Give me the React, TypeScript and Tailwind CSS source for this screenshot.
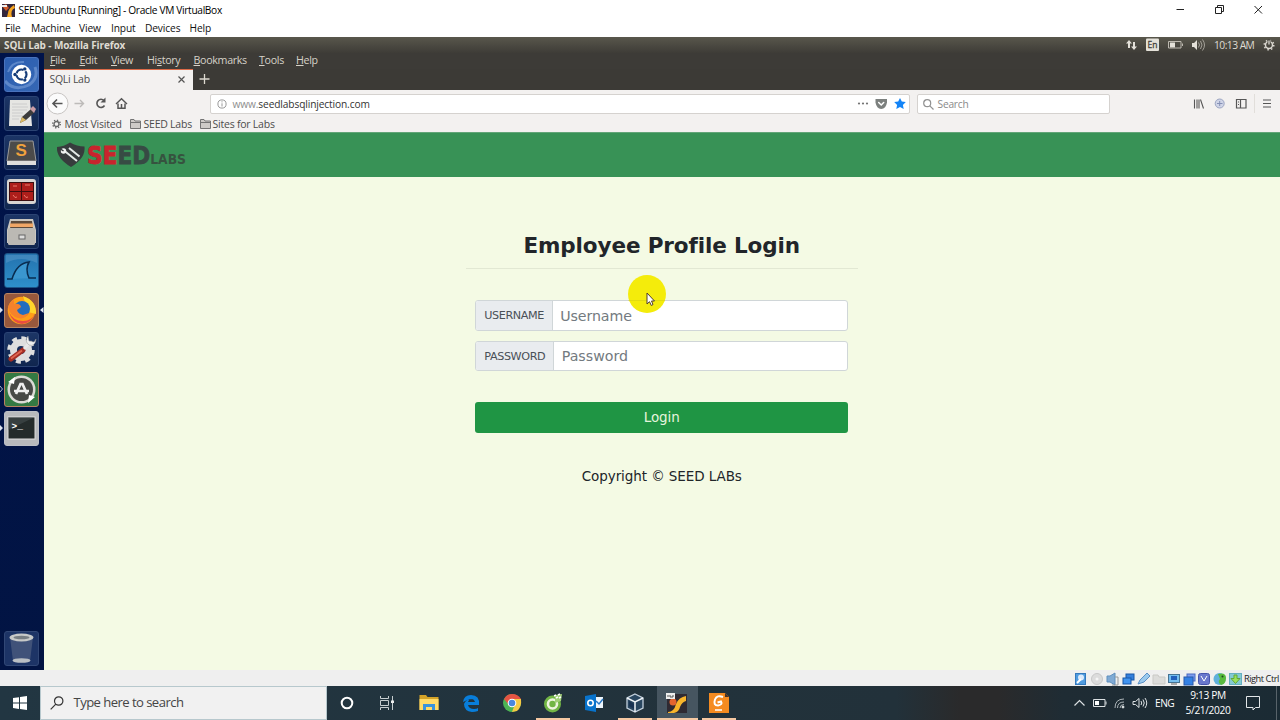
import type { ReactNode } from "react";

function MenuItem({ label, mnemonic, width }: { label: string; mnemonic: number; width: string }) {
  return (
    <span className={width}>
      {label.slice(0, mnemonic)}
      <span className="underline underline-offset-1">{label[mnemonic]}</span>
      {label.slice(mnemonic + 1)}
    </span>
  );
}

function WindowTitle() {
  return (
    <header className="flex h-[20px] shrink-0 items-center bg-white pl-[2px] text-[10.200px] text-black">
      <svg width="13" height="13" viewBox="0 0 13 13" className="mr-[3.500px]">
        <rect width="13" height="13" fill="#33263b" />
        <path d="M6 9Q6 5 12 1L13 4Q8 6 10 13H5Z" fill="#f6a51f" />
        <path d="M0 2L4 0L7 4L4 7Z" fill="#cf5b2b" />
        <path d="M0 1H5V3H0Z" fill="#eee" />
      </svg>
      <span className="tracking-[-0.340px]">SEEDUbuntu [Running] - Oracle VM VirtualBox</span>
      <svg width="90" height="14" viewBox="0 0 90 14" className="mr-[14px] ml-auto" fill="none" stroke="#222" strokeWidth="1">
        <path d="M0.500 6.500H8" />
        <path d="M39.500 4.500h6v6h-6zM41.500 4.500v-2h6v6h-2" />
        <path d="M78.500 3L86 10.500M86 3L78.500 10.500" />
      </svg>
    </header>
  );
}

function VmMenu() {
  return (
    <nav className="flex h-[17px] shrink-0 items-center bg-white pl-[5px] text-[10.200px] tracking-[-0.120px] text-[#111]">
      <span className="w-[26px]">File</span>
      <span className="w-[48px]">Machine</span>
      <span className="w-[32px]">View</span>
      <span className="w-[34px]">Input</span>
      <span className="w-[44.500px]">Devices</span>
      <span>Help</span>
    </nav>
  );
}

function GuestPanel() {
  return (
    <div className="flex h-[16px] shrink-0 items-center bg-linear-to-b from-[#59574c] to-[#3e3c37] pl-[4px] text-[10px] text-[#dfdbd2]">
      <span className="font-bold tracking-[-0.120px]">SQLi Lab - Mozilla Firefox</span>
      <svg width="86" height="16" viewBox="0 0 86 16" className="ml-auto">
        <g fill="#e4e1d9">
          <path d="M3 3L6 6.500H4V11H2V6.500H0ZM8 13L5 9.500H7V5H9V9.500H11Z" />
          <rect x="20" y="1.500" width="13" height="12.500" rx="1" />
          <path d="M66 6h2l3-3v10l-3-3h-2z" />
          <rect x="44" y="5.500" width="5" height="5" />
        </g>
        <text x="21.500" y="11" fontSize="8.500" fill="#45433d" stroke="#45433d" strokeWidth=".3" fontFamily="Open Sans">En</text>
        <path d="M42.500 4.500H55V11H42.500ZM56.500 6.500V9" fill="none" stroke="#bdb9b0" />
        <path d="M72.500 5.500q2 2.500 0 5M74.500 4q3 4 0 8M76.500 2.500q4 5.500 0 11" fill="none" stroke="#a5a299" />
      </svg>
      <span className="ml-[2px] w-[49px] text-[10.300px] tracking-[-0.550px] whitespace-nowrap">10:13 AM</span>
      <svg width="12" height="12" viewBox="0 0 12 12" className="mr-[5px]" fill="none" stroke="#dedbd3">
        <circle cx="6" cy="6" r="3.500" strokeWidth="1.400" />
        <circle cx="6" cy="6" r="4.800" strokeWidth="1.500" strokeDasharray="1.500 2.270" />
        <path d="M6 0v5" stroke="#4b4941" strokeWidth="3" />
        <path d="M6 1.500v4" strokeWidth="1.300" />
      </svg>
    </div>
  );
}

function Tile({ tone, children }: { tone: string; children: ReactNode }) {
  return (
    <div className={`h-[35px] w-[35px] shrink-0 overflow-hidden rounded-[3px] border ${tone}`}>
      <svg width="33" height="33" viewBox="0 0 33 33">{children}</svg>
    </div>
  );
}

function Launcher() {
  const dim = "border-[#2b4373] bg-linear-to-b from-[#1c3566] to-[#10264f]";
  return (
    <aside className="relative flex w-[43.500px] shrink-0 flex-col gap-[4.400px] bg-linear-to-b from-[#00134a] to-[#021443] pt-[3.500px] pb-[4px] pl-[4px]">
      <Tile tone="border-[#4a73bd] bg-linear-to-br from-[#2c5eb0] to-[#3567b4]">
        <path d="M0 23Q9 34 24 27Q34 20 30 9" fill="none" stroke="#7ba0d8" strokeWidth="3" opacity=".6" />
        <path d="M3 14Q7 3 19 4" fill="none" stroke="#7ba0d8" strokeWidth="2" opacity=".6" />
        <circle cx="16.500" cy="16.500" r="9.700" fill="#fff" />
        <circle cx="16.500" cy="16.500" r="5" fill="none" stroke="#173d79" strokeWidth="2.200" strokeDasharray="8.470 2" strokeDashoffset="-6.200" />
        <circle cx="10" cy="16.500" r="1.700" fill="#173d79" />
        <circle cx="19.800" cy="10.900" r="1.700" fill="#173d79" />
        <circle cx="19.800" cy="22.100" r="1.700" fill="#173d79" />
      </Tile>
      <Tile tone={dim}>
        <path d="M5 3H25L27 29H4Z" fill="#e6e6e3" />
        <path d="M7 7H22M7 10H23M7 13H22M7 16H18M7 19H18M7 22H14" stroke="#ccc" />
        <path d="M15 26L17 20L26 12L30 15L21 23Z" fill="#3c3c3c" />
        <path d="M15 26L17 20L21 23Z" fill="#dbb963" />
        <path d="M25 12L28 9L31 12L29 16Z" fill="#c99ca5" />
      </Tile>
      <Tile tone={dim}>
        <path d="M5 5H28L31 25V29H2V25Z" fill="#484848" />
        <path d="M5 5H28L31 25H2Z" fill="#4c4b4a" stroke="#999" />
        <path d="M2 25H31V29H2Z" fill="#dededb" />
        <text x="10.500" y="20" fontSize="17" fontWeight="bold" fill="#f1a23d" fontFamily="Liberation Sans">S</text>
      </Tile>
      <Tile tone={dim}>
        <rect x="2" y="3" width="29" height="25" rx="3" fill="#d8d5d1" />
        <rect x="4" y="6" width="25" height="19" fill="#3c0e10" />
        <path d="M5 7H16V15H5ZM17 7H28V15H17ZM5 16H16V24H5ZM17 16H28V24H17Z" fill="#ad1e1b" />
        <path d="M8 10h4M20 9h5M8 19q2 4 4 2M19 19q2 4 4 2" fill="none" stroke="#ed796b" />
      </Tile>
      <Tile tone={dim}>
        <path d="M5 4H28L31 15V28H2V15Z" fill="#c9c6c0" />
        <path d="M6 6H27L28 14H5Z" fill="#5c4b3c" />
        <path d="M5 8.500H28V12H5Z" fill="#f0a767" />
        <rect x="3" y="13" width="27" height="17" rx="1.500" fill="#bbb9b4" />
        <rect x="14" y="20" width="6" height="4" fill="#ddd" stroke="#666" />
      </Tile>
      <Tile tone="border-[#1c5385] bg-linear-to-b from-[#2472ae] to-[#2e90cb]">
        <path d="M2 25H7Q12 9 24 8Q20 15 24 24H31" fill="#3a96cf" stroke="#092c50" strokeWidth="1.600" />
        <path d="M1 1H32V9Q16 1 1 9Z" fill="#73aad4" opacity=".35" />
      </Tile>
      <Tile tone="border-[#b88562] bg-[#98583c]">
        <circle cx="16.500" cy="16.500" r="13.800" fill="#ff9f17" />
        <path d="M18 2Q32 7 31 20L23 18Z" fill="#ffd52b" />
        <circle cx="17" cy="15" r="8" fill="#226dbf" />
        <path d="M3 13Q5 7 9 6L9 10Q15 9 16 13L12 16Q13 20 18 21L24 19Q20 26 13 24Q5 22 3 13Z" fill="#f6822b" />
        <path d="M4 18Q7 29 17 30Q27 29 30 19Q27 27 18 27Q8 27 4 18Z" fill="#e94c42" />
      </Tile>
      <Tile tone={dim}>
        <circle cx="16" cy="17" r="7.500" fill="none" stroke="#dedede" strokeWidth="7" />
        <circle cx="16" cy="17" r="12" fill="none" stroke="#dedede" strokeWidth="3.500" strokeDasharray="5 4.420" />
        <path d="M6 26L18 17" stroke="#a52e24" strokeWidth="5" strokeLinecap="round" />
        <path d="M6 25.500L17 17.500" stroke="#df6651" strokeWidth="1.800" />
        <path d="M19 16L25 9" stroke="#e8e8e8" strokeWidth="3" />
        <path d="M23 3L24 8L29 9L31 6Q30 14 24 12Q19 8 23 3Z" fill="#eee" stroke="#999" strokeWidth=".5" />
      </Tile>
      <Tile tone="border-[#b68060] bg-[#347943]">
        <circle cx="16.500" cy="16.500" r="14" fill="#dadad5" />
        <circle cx="16.500" cy="16.500" r="11.500" fill="#474946" />
        <path d="M11 21L15.500 11H17.500L22 21M9 18H24" fill="none" stroke="#eee" strokeWidth="2.700" />
        <path d="M3 9L10 4L9 11ZM30 24L23 30L24 22Z" fill="#fff" />
      </Tile>
      <Tile tone="border-[#bcbfc6] bg-[#b8babd]">
        <rect x="3" y="5" width="27" height="22" fill="#242b2b" stroke="#ddd" />
        <path d="M3 5H30L3 18Z" fill="#566061" opacity=".4" />
        <text x="6.500" y="17" fontSize="9.500" fontWeight="bold" fill="#fff" fontFamily="Liberation Mono">&gt;_</text>
      </Tile>
      <div className="mt-auto flex">
        <Tile tone="border-[#314775] bg-[#1d3466]">
          <path d="M5 5H28L25 29H8Z" fill="#6c7890" opacity=".45" />
          <ellipse cx="16.500" cy="5.500" rx="12" ry="4" fill="#c7c9c8" />
          <ellipse cx="16.500" cy="5.500" rx="8" ry="1.700" fill="#777e83" />
          <ellipse cx="16.500" cy="28.500" rx="9" ry="2.300" fill="#babfc4" />
        </Tile>
      </div>
      <svg width="44" height="400" viewBox="0 0 44 400" className="absolute top-0 left-0">
        <path d="M0 254L3 257L0 260ZM43.500 254L40 257L43.500 260ZM0 372L3 375L0 378Z" fill="#dce2ed" />
        <path d="M0 333L2.500 336L0 339" fill="none" stroke="#aab7cb" />
      </svg>
    </aside>
  );
}

function FirefoxChrome() {
  return (
    <>
      <div className="flex h-[16px] shrink-0 items-center bg-[#3d3b37] pb-px pl-[6.500px] text-[10.700px] tracking-[-0.330px] text-[#d6d2c8]">
        <MenuItem label="File" mnemonic={0} width="w-[29.500px]" />
        <MenuItem label="Edit" mnemonic={0} width="w-[31.500px]" />
        <MenuItem label="View" mnemonic={0} width="w-[36px]" />
        <MenuItem label="History" mnemonic={2} width="w-[46.500px]" />
        <MenuItem label="Bookmarks" mnemonic={0} width="w-[65.500px]" />
        <MenuItem label="Tools" mnemonic={0} width="w-[37px]" />
        <MenuItem label="Help" mnemonic={0} width="w-[30px]" />
      </div>
      <div className="flex h-[21px] shrink-0 bg-[#3c3a36]">
        <div className="flex w-[149px] items-center justify-between border-t border-[#dd6b48] bg-[#f3f1f0] pr-[8px] pb-[2px] pl-[6px] text-[10.500px] tracking-[-0.280px] text-[#4c4c4c]">
          <span>SQLi Lab</span>
          <svg width="7" height="7" viewBox="0 0 7 7" stroke="#555" strokeWidth="1.200" className="mt-px"><path d="M.5 .5L6.500 6.500M6.500 .5L.5 6.500" /></svg>
        </div>
        <svg width="22" height="21" viewBox="0 0 22 21" fill="none" stroke="#ddd9d0" strokeWidth="1.300"><path d="M6.500 10H16.500M11.500 5V15" /></svg>
      </div>
      <div className="flex h-[28px] shrink-0 items-center bg-[#f3f1f0]">
        <svg width="166" height="28" viewBox="0 0 166 28" fill="none" stroke="#555" strokeWidth="1.600">
          <circle cx="13.500" cy="13.500" r="10.500" fill="#fbfbfb" stroke="#c8c5c3" strokeWidth="1" />
          <path d="M18.500 13.500H9M13 9.500L9 13.500L13 17.500" />
          <path d="M30.500 13.500H39.500M36 10L39.500 13.500L36 17" stroke="#bdbbb9" strokeWidth="1.400" />
          <path d="M60 10.500A4.100 4.100 0 1 0 60.500 15.500" />
          <path d="M56.500 12.500H61.500V7.500Z" fill="#555" stroke="none" />
          <path d="M72 14L77.500 8.700L83 14" strokeWidth="1.400" />
          <path d="M74 13.500V18.300H81V13.500M77.500 18V14" strokeWidth="1.500" />
        </svg>
        <div className="flex h-[20px] w-[700px] items-center rounded-[2px] border border-[#d5d2cf] bg-white pl-[6px] text-[10.200px] tracking-[-0.130px]">
          <svg width="10" height="10" viewBox="0 0 10 10" className="mr-[6px]" fill="none" stroke="#999"><circle cx="5" cy="5" r="4.100" /><path d="M5 4.300V7.500M5 2.300V3.400" /></svg>
          <span className="text-[#8e8e8e]">www.<span className="text-[#333]">seedlabsqlinjection.com</span></span>
          <svg width="52" height="14" viewBox="0 0 52 14" className="ml-auto">
            <g fill="#747474"><circle cx="2" cy="6.500" r="1.100" /><circle cx="6" cy="6.500" r="1.100" /><circle cx="10" cy="6.500" r="1.100" /></g>
            <path d="M18.500 2H30V5.500Q29 11.500 24.200 12Q19.500 11.500 18.500 5.500Z" fill="#7c807e" />
            <path d="M21.700 5.500L24.200 8L26.700 5.500" fill="none" stroke="#fff" strokeWidth="1.500" strokeLinecap="round" />
            <path d="M43 1L44.800 4.600L48.800 5.100L45.900 7.900L46.700 12.100L43 10L39.300 12.100L40.100 7.900L37.200 5.100L41.200 4.600Z" fill="#1384f7" />
          </svg>
        </div>
        <div className="ml-[7px] flex h-[20px] w-[193px] items-center rounded-[2px] border border-[#d5d2cf] bg-white pl-[5px] text-[10.200px] tracking-[-0.200px] text-[#898989]">
          <svg width="11" height="11" viewBox="0 0 11 11" className="mr-[4px]" fill="none" stroke="#929292" strokeWidth="1.200"><circle cx="4.200" cy="4.200" r="3.500" /><path d="M6.800 6.800L10.500 10.500" /></svg>
          Search
        </div>
        <svg width="84" height="20" viewBox="0 0 84 20" className="mr-[5px] ml-auto" fill="none" stroke="#565656">
          <path d="M3.500 5.500V14.500M6 5.500V14.500M8 5.500V14.500M9.500 5.500L12.500 14.500" strokeWidth="1.100" />
          <circle cx="28.700" cy="9.500" r="4.500" fill="#cfd4e7" stroke="#9ca5c1" /><path d="M28.700 7V12M26 9.500H31.500" stroke="#8590b5" />
          <path d="M45.500 5.500H55V14H45.500ZM49.500 5.500V14M47 8H48M47 10.500H48" strokeWidth="1.200" />
          <path d="M63.500 0V19" stroke="#e1deda" />
          <path d="M72 6H80M72 9.500H80M72 13H80" strokeWidth="1.200" />
        </svg>
      </div>
      <div className="flex h-[14px] shrink-0 items-center bg-[#f3f1f0] pb-[2px] pl-[8.500px] text-[10.500px] tracking-[-0.230px] text-[#4c4c4c]">
        <Cog />
        <span className="mr-[8px] ml-[3.500px] w-[57.500px] whitespace-nowrap">Most Visited</span>
        <Folder />
        <span className="mr-[8px] ml-[2.500px] w-[48px] whitespace-nowrap">SEED Labs</span>
        <Folder />
        <span className="ml-[2px] whitespace-nowrap">Sites for Labs</span>
      </div>
    </>
  );
}

function Cog() {
  return (
    <svg width="9" height="10" viewBox="0 0 9 10" fill="none" stroke="#666">
      <circle cx="4.500" cy="5" r="2.500" strokeWidth="1.300" />
      <circle cx="4.500" cy="5" r="3.800" strokeWidth="1.400" strokeDasharray="1.300 1.680" />
    </svg>
  );
}

function Folder() {
  return (
    <svg width="11" height="10" viewBox="0 0 11 10"><path d="M.5 9.500V.5H4L5 2H10.500V9.500ZM.5 3.500H10.500" fill="#cecbc8" stroke="#747474" /></svg>
  );
}

function Logo() {
  return (
    <svg width="160" height="32" viewBox="0 0 160 32">
      <path d="M1 8Q8 7.500 14 3.500Q21 7.500 28.500 7.500Q30 19 15 28Q0 19 1 8Z" fill="#373c3d" />
      <path d="M8 11.500L21 22M13 9L23.500 17.500" stroke="#e4e9e7" strokeWidth="2" />
      <circle cx="7.500" cy="12" r="2.700" fill="#f1f3f2" />
      <path d="M4.500 10L7.500 12" stroke="#373c3d" strokeWidth="1.500" />
      <text x="31" y="25" fontSize="24.500" fontFamily="DejaVu Sans" fontWeight="bold" textLength="99" lengthAdjust="spacingAndGlyphs">
        <tspan fill="#c8242d" stroke="#c8242d" strokeWidth=".8">SE</tspan>
        <tspan fill="#374b44" stroke="#374b44" strokeWidth=".8">ED</tspan>
        <tspan fill="#36533f" fontSize="14">LABS</tspan>
      </text>
    </svg>
  );
}

function LoginPage() {
  return (
    <>
      <header className="flex h-[44.500px] shrink-0 items-center border-t border-[#62a578] bg-[#389256] pl-[12.500px]">
        <Logo />
      </header>
      <main className="flex flex-1 flex-col items-center bg-[#f4fae4] font-['DejaVu_Sans',sans-serif]">
        <div className="mt-[52.500px] flex w-[392px] flex-col items-center">
          <h1 className="h-[39.500px] w-full border-b border-[#e2e8d3] text-center text-[21.500px] leading-[33.500px] font-bold tracking-[-0.120px] text-[#212529]">Employee Profile Login</h1>
          <form className="relative mt-[31px] w-[373px]">
            <label className="flex h-[31px] overflow-hidden rounded-[3px] border border-[#d0d6d8] bg-white">
              <span className="flex w-[77px] items-center border-r border-[#d0d6d8] bg-[#e9ecef] pt-[2px] pl-[8px] text-[11.200px] tracking-[-0.400px] text-[#495057]">USERNAME</span>
              <input className="min-w-0 flex-1 pt-[2px] pl-[7px] text-[14.200px] tracking-[-0.100px] outline-none placeholder:text-[#737a80]" placeholder="Username" />
            </label>
            <label className="mt-[10px] flex h-[30.500px] overflow-hidden rounded-[3px] border border-[#d0d6d8] bg-white">
              <span className="flex w-[78px] items-center border-r border-[#d0d6d8] bg-[#e9ecef] pt-[2px] pl-[8px] text-[11.200px] tracking-[-0.380px] text-[#495057]">PASSWORD</span>
              <input type="password" className="min-w-0 flex-1 pt-px pl-[7.500px] text-[14.200px] outline-none placeholder:text-[#737a80]" placeholder="Password" />
            </label>
            <button type="button" className="mt-[30.500px] h-[31px] w-full rounded-[3px] bg-[#1f9544] pt-[2px] text-[13.500px] tracking-[-0.100px] text-[#e5f4dd]">Login</button>
            <svg width="40" height="40" viewBox="0 0 40 40" className="absolute top-[-26px] left-[152px]">
              <circle cx="20" cy="20" r="19" fill="#f4ec0b" />
              <path d="M1.500 26.500H38" stroke="#d9d313" opacity=".6" />
              <path d="M20 19V30L22.500 27.700L24.300 31.500L26 30.500L24.500 27H27.500Z" fill="#fff" stroke="#503e2b" />
            </svg>
          </form>
          <footer className="mt-[33.500px] text-[13.500px] leading-[20px] tracking-[-0.080px] text-[#212529]">Copyright © SEED LABs</footer>
        </div>
      </main>
    </>
  );
}

function VmStatus() {
  return (
    <div className="flex h-[16px] shrink-0 items-center justify-end bg-[#efefef] pt-px pr-px text-[9.300px] tracking-[-0.480px] text-[#222]">
      <svg width="168" height="14" viewBox="0 0 168 14" className="mr-px" strokeWidth="1">
        <rect x=".5" y="1.500" width="10" height="11" fill="#4f9bdf" stroke="#3479bd" /><circle cx="6" cy="5.500" r="3" fill="#dceafb" /><path d="M2 11L6 7" stroke="#fff" strokeWidth="2" />
        <circle cx="22" cy="7" r="5.500" fill="#dcdcdc" stroke="#c8c8c8" /><circle cx="22" cy="7" r="1.500" fill="#f5f5f5" />
        <path d="M32 4H35L40 1V13L35 10H32Z" fill="#80aad4" stroke="#5e8fbd" /><path d="M40 5H43V13H37" fill="none" stroke="#999" />
        <rect x="51" y="2" width="8" height="6" fill="#347edd" stroke="#1957a7" /><rect x="48" y="6" width="8" height="6" fill="#4194f1" stroke="#1957a7" />
        <path d="M63 12L65 8L72 1L75 4L69 10Z" fill="#9bc9ed" stroke="#5b91c7" />
        <path d="M78 3H83L84 5H90V12H78Z" fill="#dcdcda" stroke="#c9c9c5" />
        <rect x="93.500" y="2.500" width="11" height="8" fill="#76beef" stroke="#467392" /><rect x="96" y="4" width="6" height="4" fill="#225ebb" /><path d="M96 12H102" stroke="#666" />
        <rect x="112" y="2" width="8" height="7" fill="#7f9cf0" stroke="#4a6ac0" /><rect x="109" y="5" width="9" height="8" fill="#3481e4" stroke="#2858aa" />
        <rect x="123.500" y="1.500" width="11" height="11" rx="2" fill="#6977cc" stroke="#4654ac" /><path d="M126 4L129 9L132 4" fill="none" stroke="#fff" />
        <circle cx="144.500" cy="7" r="6" fill="#5fb0dc" /><path d="M143 2Q151 0 151 6Q151 12 146 13Q142 10 145 7Z" fill="#5aba3f" /><circle cx="147.500" cy="4.500" r="1" fill="#20471f" />
        <rect x="154.500" y="1.500" width="12" height="11" fill="#84c9d3" stroke="#66afc0" /><path d="M159 3H162V6.500H165L160.500 11.500L156 6.500H159Z" fill="#9be05b" stroke="#62a63a" />
      </svg>
      <span className="whitespace-nowrap">Right Ctrl</span>
    </div>
  );
}

function TaskApp({ width, running = "", children }: { width: string; running?: string; children: ReactNode }) {
  return (
    <div className={`flex h-full shrink-0 flex-col items-center ${width}`}>
      <svg width="22" height="22" viewBox="0 0 22 22" className="mt-[6px]">{children}</svg>
      {running && <span className={`mt-auto h-[2px] bg-[#f5c8a2] ${running}`} />}
    </div>
  );
}

function Taskbar() {
  return (
    <footer className="flex h-[34px] shrink-0 bg-linear-[90deg,#223642_0%,#22323b_55%,#22313a_70%,#2a2a2b_75%,#2a2a2b_78%,#1f2c34_83%,#1b2b34_100%] text-white">
      <div className="flex w-[40px] items-center justify-center">
        <svg width="14" height="14" viewBox="0 0 14 14" fill="#fff"><path d="M0 2L6 1.200V6.600H0ZM7 1L14 0V6.600H7ZM0 7.500H6V12.900L0 12ZM7 7.500H14V14L7 13Z" /></svg>
      </div>
      <div className="flex w-[286.500px] items-center border border-[#b7c8cd] bg-[#f1f1f1] pl-[9px] text-[13.100px] text-[#454545]">
        <svg width="14" height="14" viewBox="0 0 14 14" className="mr-[9.500px]" fill="none" stroke="#333" strokeWidth="1.200"><circle cx="8.700" cy="5" r="4.200" /><path d="M5.800 8.200L.7 13.300" /></svg>
        <span className="tracking-[-0.560px]">Type here to search</span>
      </div>
      <TaskApp width="w-[40px]"><circle cx="11" cy="11" r="5.300" fill="none" stroke="#fff" strokeWidth="2" /></TaskApp>
      <TaskApp width="w-[40px]"><path d="M4.500 4V6.500H12.500V4M4.500 18V15.500H12.500V18M4.500 8.500H12.500V13.500H4.500ZM16.500 4V18" fill="none" stroke="#c6cdd0" /><path d="M15 8.500H18V11H15Z" fill="#eee" /></TaskApp>
      <TaskApp width="w-[44px]"><path d="M1.500 3H8L9.500 5H20.500V18H1.500Z" fill="#d4a328" /><path d="M1.500 7H20.500V18H1.500Z" fill="#ffdb68" /><path d="M5 18V12H17V18H14V15H8V18Z" fill="#3993dc" /></TaskApp>
      <TaskApp width="w-[40px]"><path d="M3 10Q4 3 11 3Q20 3 19 13H8Q9 17 14 17Q17 17 18 16V19Q15 20 12 20Q4 19 4 12Q6 7 12 7Q6 8 3 10ZM8 10H15Q14 7 11.500 7Q9 7 8 10" fill="#087edb" fillRule="evenodd" /></TaskApp>
      <TaskApp width="w-[42px]"><circle cx="11" cy="11" r="9" fill="#4db454" /><path d="M3 7Q6 2 11 2Q17 2 20 7H11L8 13Z" fill="#e65343" /><path d="M20 7Q21 15 16 19L11 20L14 12L11 7Z" fill="#f6ca43" /><circle cx="11" cy="11" r="4.300" fill="#fff" /><circle cx="11" cy="11" r="3.300" fill="#4b87dd" /></TaskApp>
      <TaskApp width="w-[41px]" running="w-[34px]"><circle cx="10.500" cy="12" r="8.500" fill="#72b545" /><circle cx="10.500" cy="12" r="4.500" fill="none" stroke="#eef4df" strokeWidth="2.600" /><path d="M13 3L20 2L19 9L13 11Z" fill="#a1cf77" /><path d="M12 4L14 3M16 3L18 2M14 6L16 5M17 6L19 5" stroke="#fff" strokeWidth="1.400" /></TaskApp>
      <TaskApp width="w-[41px]"><path d="M10 5H20V16H10Z" fill="#eef6fd" /><path d="M2 4L13 2V20L2 18Z" fill="#0873cc" /><circle cx="7.500" cy="11" r="2.700" fill="none" stroke="#fff" strokeWidth="1.600" /><path d="M13 9L16 12L20 7" fill="none" stroke="#2979c7" strokeWidth="1.500" /></TaskApp>
      <TaskApp width="w-[41px]" running="w-[34px]"><path d="M11 2L19 6V16L11 20L3 16V6Z" fill="#29465f" stroke="#c3d0dc" strokeWidth="1.300" /><path d="M3 6L11 10L19 6M11 10V20" fill="none" stroke="#eef3f7" strokeWidth="1.500" /><path d="M5 9L10 12V17L5 14Z" fill="#183252" /></TaskApp>
      <TaskApp width="w-[41px] bg-[#465560] ml-px" running="w-full"><rect x="1" y="2" width="20" height="19" fill="#2f2a32" /><path d="M2 20Q8 20 10 12Q13 5 20 4V9Q16 10 14 15Q13 20 8 21H2Z" fill="#f8b52b" /><circle cx="7" cy="10" r="3.500" fill="#e4652f" /><rect x="0" y="1" width="9" height="6" fill="#eee" /><path d="M2 5V3M4 3V5H7V3" fill="none" stroke="#555" /></TaskApp>
      <TaskApp width="w-[42px]" running="w-[34px]"><path d="M1 1H17L21 5V21H1Z" fill="#f58b20" /><path d="M17 1L21 5H17Z" fill="#493225" /><path d="M15 5Q9 2.500 7 7.500Q5 13.500 10 13.500Q15 12.500 13 9.500L9.500 10.500" fill="none" stroke="#fff" strokeWidth="2" /><path d="M7 18H14" stroke="#fff" strokeWidth="1.500" /></TaskApp>
      <svg width="76" height="34" viewBox="0 0 76 34" className="ml-auto" fill="none" stroke="#dce1e3">
        <path d="M1.500 19.500L6.500 14.500L11.500 19.500" strokeWidth="1.200" />
        <path d="M20.500 13.500H32V20.500H20.500ZM33 15.500V18.500" /><rect x="22" y="15" width="4" height="4" fill="#fff" stroke="none" />
        <path d="M42 22Q42 13 51 13M44.500 22Q44.500 16 51 16M47 22Q47 18.500 51 18.500" stroke="#abb3b7" /><circle cx="50" cy="21" r="1" fill="#fff" />
        <path d="M60 15.500H62.500L66 12.500V21.500L62.500 18.500H60ZM68 15Q69.500 17 68 19M70 13.500Q72.500 17 70 20.500M72 12Q75.500 17 72 22" />
      </svg>
      <span className="ml-[6px] w-[30px] self-center text-[10.200px] tracking-[-0.500px] whitespace-nowrap">ENG</span>
      <div className="flex w-[46px] flex-col items-center justify-center text-[10.200px] leading-[15px] tracking-[-0.380px]"><span>9:13 PM</span><span>5/21/2020</span></div>
      <svg width="49" height="34" viewBox="0 0 49 34" fill="none" stroke="#e2e6e8"><path d="M15.500 10.500H28.500V21.500H24.500L22 24V21.500H15.500Z" /><path d="M45.500 0V34" stroke="#58636a" /></svg>
    </footer>
  );
}

export default function App() {
  return (
    <div className="flex h-[720px] w-[1280px] flex-col overflow-hidden font-['Open_Sans','Noto_Sans',sans-serif] leading-none">
      <WindowTitle />
      <VmMenu />
      <GuestPanel />
      <div className="flex min-h-0 flex-1">
        <Launcher />
        <div className="flex min-w-0 flex-1 flex-col">
          <FirefoxChrome />
          <LoginPage />
        </div>
      </div>
      <VmStatus />
      <Taskbar />
    </div>
  );
}
